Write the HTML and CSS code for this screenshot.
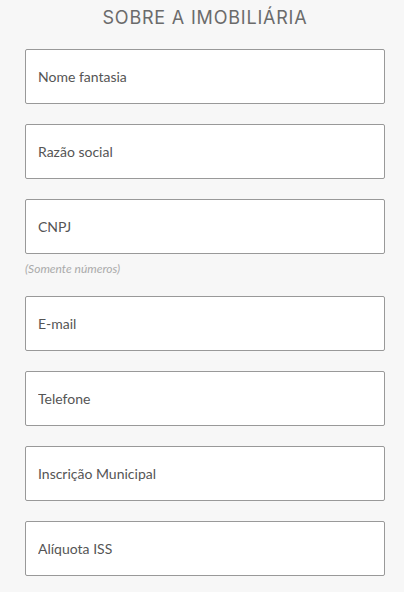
FILE: index.html
```html
<!DOCTYPE html>
<html lang="pt-BR">
<head>
<meta charset="utf-8">
<link rel="stylesheet" href="styles.css">
</head>
<body>
<main class="form">
  <h1 class="title">SOBRE A IMOBILIÁRIA</h1>
  <div class="fields">
    <input class="field" type="text" placeholder="Nome fantasia">
    <input class="field" type="text" placeholder="Razão social">
    <div class="group">
      <input class="field" type="text" placeholder="CNPJ">
      <span class="hint">(Somente números)</span>
    </div>
    <input class="field" type="text" placeholder="E-mail">
    <input class="field" type="text" placeholder="Telefone">
    <input class="field" type="text" placeholder="Inscrição Municipal">
    <input class="field" type="text" placeholder="Alíquota ISS">
  </div>
</main>
</body>
</html>
```

FILE: styles.css
```css
html, body {
  margin: 0;
  padding: 0;
  background: #f7f7f7;
}
.form {
  width: 404px;
  padding: 7px 19px 0 25px;
  box-sizing: border-box;
}
.title {
  margin: 0 0 20px;
  font-family: "Inter", "Open Sans", sans-serif;
  font-weight: 400;
  font-size: 18px;
  line-height: 22px;
  letter-spacing: 0.8px;
  color: #6b6b6b;
  text-align: center;
}
.fields {
  display: flex;
  flex-direction: column;
  gap: 20px;
}
.group {
  display: flex;
  flex-direction: column;
}
.field {
  display: block;
  width: 360px;
  height: 55px;
  box-sizing: border-box;
  margin: 0;
  padding: 0 12px;
  border: 1px solid #999;
  border-radius: 2px;
  background: #fff;
  font-family: "Lato", sans-serif;
  font-size: 14px;
  color: #555;
  outline: none;
}
.field::placeholder {
  color: #555;
  opacity: 1;
}
.hint {
  margin: 7px 0 0;
  font-family: "Lato", sans-serif;
  font-style: italic;
  font-size: 12px;
  line-height: 15px;
  color: #aaa;
}
```
